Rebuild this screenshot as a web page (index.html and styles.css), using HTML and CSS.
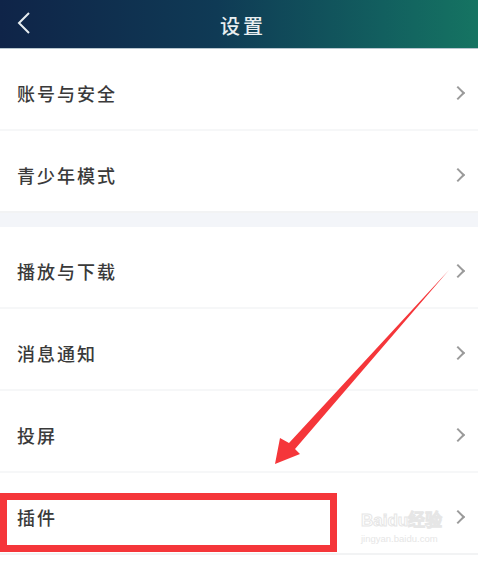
FILE: index.html
```html
<!DOCTYPE html>
<html lang="zh-CN">
<head>
    <meta charset="UTF-8">
    <meta name="viewport" content="width=device-width, initial-scale=1.0">
    <title>设置</title>
    <link rel="stylesheet" href="styles.css">
</head>
<body>

    <header class="topbar">
        <a href="#" class="back">
            <svg width="14" height="22" viewBox="0 0 14 22">
                <polyline points="12,1 2,11 12,21" fill="none" stroke="#e6ecef" stroke-width="2"/>
            </svg>
        </a>
        <h1 class="title">设置</h1>
    </header>

    <ul class="group">
        <li class="item"><span>账号与安全</span><i class="arrow"></i></li>
        <li class="item"><span>青少年模式</span><i class="arrow"></i></li>
    </ul>

    <div class="gap"></div>

    <ul class="group">
        <li class="item"><span>播放与下载</span><i class="arrow"></i></li>
        <li class="item"><span>消息通知</span><i class="arrow"></i></li>
        <li class="item"><span>投屏</span><i class="arrow"></i></li>
        <li class="item"><span>插件</span><i class="arrow"></i></li>
    </ul>

    <div class="watermark">
        <div class="wm-logo">Baidu经验</div>
        <div class="wm-url">jingyan.baidu.com</div>
    </div>

    <!-- 标注 -->
    <div class="mark-box"></div>
    <svg class="mark-arrow" width="478" height="565" viewBox="0 0 478 565">
        <polygon points="449,270 289,443 280,438 275,464 300,454 295,449" fill="#f5363a"/>
    </svg>

</body>
</html>
```

FILE: styles.css
```css
* {
    margin: 0;
    padding: 0;
    box-sizing: border-box;
}

body {
    width: 478px;
    height: 565px;
    overflow: hidden;
    position: relative;
    background: #fff;
    font-family: "Noto Sans CJK SC", "Noto Sans", sans-serif;
}

/* 顶部栏 */
.topbar {
    height: 49px;
    display: flex;
    align-items: center;
    justify-content: center;
    position: relative;
    background: linear-gradient(90deg, #0f2448 0%, #0f3a55 45%, #125f5f 80%, #157462 100%);
    border-bottom: 1px solid #b7c6cf;
}

.topbar .back {
    position: absolute;
    left: 17px;
    top: 12px;
    display: block;
}

.topbar .title {
    font-size: 20px;
    font-weight: 500;
    color: #e8eef0;
    letter-spacing: 3px;
    margin-left: 8px;
    margin-top: 3px;
}

/* 列表 */
.group {
    list-style: none;
}

.item {
    height: 82px;
    display: flex;
    align-items: center;
    justify-content: space-between;
    padding: 7px 9px 0 17px;
    border-bottom: 2px solid #f6f7f8;
}

.item span {
    font-size: 18px;
    font-weight: 500;
    color: #3a3a3a;
    letter-spacing: 2px;
}

.item:last-child {
    border-bottom-color: #f2f3f4;
}

.arrow {
    width: 10px;
    height: 10px;
    border-top: 2px solid #9a9a9a;
    border-right: 2px solid #9a9a9a;
    transform: rotate(45deg);
    margin-right: 6px;
}

.gap {
    height: 14px;
    background: #f3f5f9;
}

/* 红色标注 */
.mark-box {
    position: absolute;
    left: 0;
    top: 493px;
    width: 337px;
    height: 59px;
    border: 7px solid #f5363a;
}

.mark-arrow {
    position: absolute;
    left: 0;
    top: 0;
}

/* 水印 */
.watermark {
    position: absolute;
    left: 361px;
    top: 509px;
    white-space: nowrap;
}

.wm-logo {
    font-family: "Liberation Sans", sans-serif;
    font-size: 17px;
    line-height: 23px;
    font-weight: 700;
    color: transparent;
    -webkit-text-stroke: 1px #e6e6e6;
}

.wm-url {
    font-family: "Liberation Sans", sans-serif;
    font-size: 9.5px;
    line-height: 14px;
    color: #e6e6e6;
}
```
